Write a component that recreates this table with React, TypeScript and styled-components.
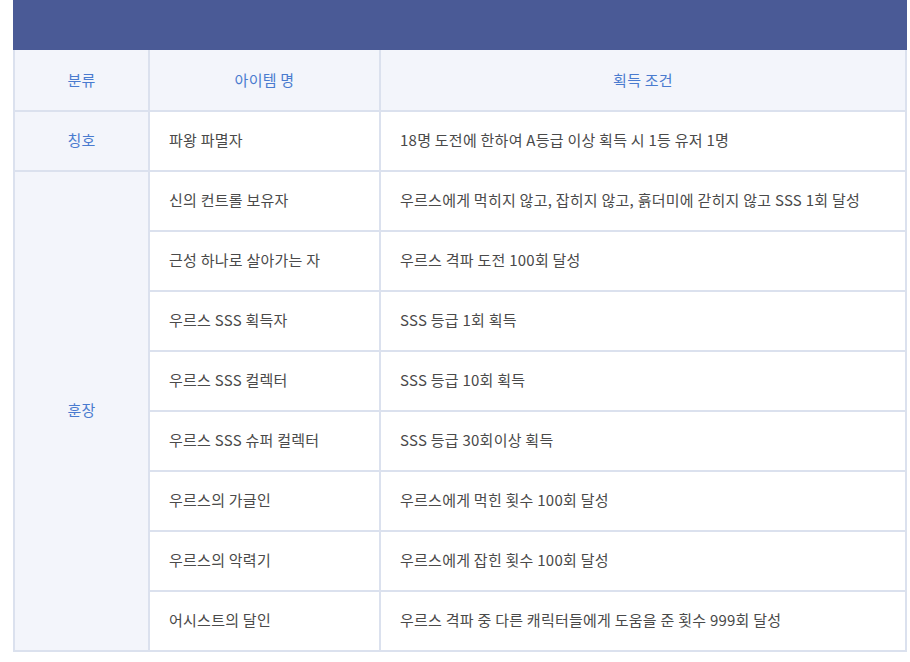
import React from "react";
import styled, { createGlobalStyle } from "styled-components";

const Global = createGlobalStyle`
  html, body { margin: 0; padding: 0; background: #ffffff; }
  body { font-family: "Noto Sans CJK KR", "Noto Sans", sans-serif; }
`;

const Page = styled.div`
  width: 894px;
  margin-left: 13px;
`;

const TopBar = styled.div`
  height: 50px;
  background: #4a5a96;
`;

const Table = styled.table`
  width: 100%;
  border-collapse: collapse;
  table-layout: fixed;
  font-size: 15px;
  letter-spacing: 0.25px;
`;

const HeadCell = styled.th`
  height: 58px;
  padding: 0 0 2px;
  background: #f3f5fb;
  color: #4a7bcf;
  font-weight: 400;
  text-align: center;
  border: 2px solid #dbe1ee;
  border-top: none;
`;

const CatCell = styled.td`
  padding: 0 0 4px;
  background: #f3f5fb;
  color: #4a7bcf;
  text-align: center;
  border: 2px solid #dbe1ee;
`;

const Cell = styled.td`
  height: 54px;
  padding: 0 0 4px 19px;
  color: #4a4a4a;
  text-align: left;
  border: 2px solid #dbe1ee;
`;

type Row = { name: string; cond: string };

const titles: Row[] = [
  { name: "파왕 파멸자", cond: "18명 도전에 한하여 A등급 이상 획득 시 1등 유저 1명" },
];

const medals: Row[] = [
  { name: "신의 컨트롤 보유자", cond: "우르스에게 먹히지 않고, 잡히지 않고, 흙더미에 갇히지 않고 SSS 1회 달성" },
  { name: "근성 하나로 살아가는 자", cond: "우르스 격파 도전 100회 달성" },
  { name: "우르스 SSS 획득자", cond: "SSS 등급 1회 획득" },
  { name: "우르스 SSS 컬렉터", cond: "SSS 등급 10회 획득" },
  { name: "우르스 SSS 슈퍼 컬렉터", cond: "SSS 등급 30회이상 획득" },
  { name: "우르스의 가글인", cond: "우르스에게 먹힌 횟수 100회 달성" },
  { name: "우르스의 악력기", cond: "우르스에게 잡힌 횟수 100회 달성" },
  { name: "어시스트의 달인", cond: "우르스 격파 중 다른 캐릭터들에게 도움을 준 횟수 999회 달성" },
];

export default function App() {
  return (
    <Page>
      <Global />
      <TopBar />
      <Table>
        <colgroup>
          <col style={{ width: 135 }} />
          <col style={{ width: 231 }} />
          <col />
        </colgroup>
        <thead>
          <tr>
            <HeadCell>분류</HeadCell>
            <HeadCell>아이템 명</HeadCell>
            <HeadCell>획득 조건</HeadCell>
          </tr>
        </thead>
        <tbody>
          {titles.map((r, i) => (
            <tr key={r.name}>
              {i === 0 && <CatCell rowSpan={titles.length}>칭호</CatCell>}
              <Cell>{r.name}</Cell>
              <Cell>{r.cond}</Cell>
            </tr>
          ))}
          {medals.map((r, i) => (
            <tr key={r.name}>
              {i === 0 && <CatCell rowSpan={medals.length}>훈장</CatCell>}
              <Cell>{r.name}</Cell>
              <Cell>{r.cond}</Cell>
            </tr>
          ))}
        </tbody>
      </Table>
    </Page>
  );
}
